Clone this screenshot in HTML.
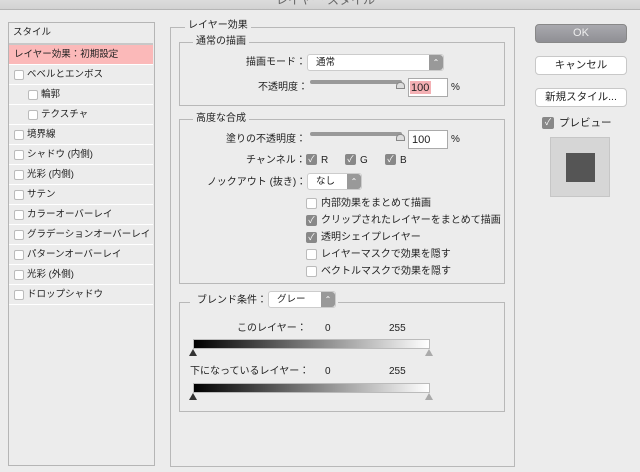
<!DOCTYPE html>
<html><head><meta charset="utf-8"><style>
*{margin:0;padding:0;box-sizing:border-box}
body{width:640px;height:472px;background:#ececec;font-family:"Liberation Sans","Noto Sans CJK JP",sans-serif;font-size:10px;line-height:12px;color:#222;position:relative;overflow:hidden}
.a{position:absolute}
.cb{position:absolute;width:10px;height:10px;border:1px solid #bbb;background:#fff;border-radius:2px}
.ck{position:absolute;width:11px;height:11px;background:#888;border-radius:2px;color:#fff;font-size:9px;line-height:11px;text-align:center}
.box{position:absolute;border:1px solid #b8b8b8}
.lg{position:absolute;background:#ececec;padding:0 3px;font-size:10px}
.row{position:absolute;left:9px;width:144px;height:20px;border-bottom:1px solid #fff;font-size:9.5px;line-height:20px}
.sel{position:absolute;background:#fff;border:1px solid #ccc;border-radius:3px;height:17px;font-size:9.5px;line-height:15px;padding-left:8px}
.sel i{position:absolute;right:0;top:0;width:14px;height:15px;background:#999;border-radius:0 3px 3px 0;color:#fff;font-style:normal;font-size:8px;text-align:center;line-height:15px}
.sl{position:absolute;height:4px;background:#999;border-radius:2px}
.btn{position:absolute;left:535px;width:92px;height:19px;background:#fff;border:1px solid #c8c8c8;border-radius:4px;text-align:center;font-size:10.5px;line-height:17px}
.grad{position:absolute;height:10px;background:linear-gradient(to right,#000,#fff);border:1px solid #bbb}
.tri{position:absolute;width:0;height:0;border-left:4px solid transparent;border-right:4px solid transparent}
</style></head><body>
<div class="a" style="left:0;top:0;width:640px;height:10px;background:linear-gradient(#dcdcdc,#d2d2d2);border-bottom:1px solid #b5b5b5"></div>
<div class="a" style="left:276px;top:-6px;font-size:12px;color:#666">レイヤー スタイル</div>

<div class="a" style="left:8px;top:22px;width:147px;height:444px;border:1px solid #b5b5b5;background:#ececec"></div>
<div class="row" style="top:23px;height:22px;border-bottom:2px solid #c8c8c8;padding-left:4px">スタイル</div>
<div class="row" style="top:45px;background:#fbb9b9;padding-left:5px">レイヤー効果：初期設定</div>
<div class="row" style="top:65px;padding-left:18px"><span class="cb" style="left:5px;top:5px"></span>ベベルとエンボス</div>
<div class="row" style="top:85px;padding-left:32px"><span class="cb" style="left:19px;top:5px"></span>輪郭</div>
<div class="row" style="top:105px;padding-left:32px"><span class="cb" style="left:19px;top:5px"></span>テクスチャ</div>
<div class="row" style="top:125px;padding-left:18px"><span class="cb" style="left:5px;top:5px"></span>境界線</div>
<div class="row" style="top:145px;padding-left:18px"><span class="cb" style="left:5px;top:5px"></span>シャドウ (内側)</div>
<div class="row" style="top:165px;padding-left:18px"><span class="cb" style="left:5px;top:5px"></span>光彩 (内側)</div>
<div class="row" style="top:185px;padding-left:18px"><span class="cb" style="left:5px;top:5px"></span>サテン</div>
<div class="row" style="top:205px;padding-left:18px"><span class="cb" style="left:5px;top:5px"></span>カラーオーバーレイ</div>
<div class="row" style="top:225px;padding-left:18px"><span class="cb" style="left:5px;top:5px"></span>グラデーションオーバーレイ</div>
<div class="row" style="top:245px;padding-left:18px"><span class="cb" style="left:5px;top:5px"></span>パターンオーバーレイ</div>
<div class="row" style="top:265px;padding-left:18px"><span class="cb" style="left:5px;top:5px"></span>光彩 (外側)</div>
<div class="row" style="top:285px;padding-left:18px"><span class="cb" style="left:5px;top:5px"></span>ドロップシャドウ</div>

<div class="box" style="left:170px;top:27px;width:345px;height:440px"></div>
<div class="lg" style="left:185px;top:20px">レイヤー効果</div>
<div class="box" style="left:179px;top:42px;width:326px;height:64px"></div>
<div class="lg" style="left:193px;top:36px">通常の描画</div>
<div class="a" style="left:246px;top:57px">描画モード：</div>
<div class="sel" style="left:307px;top:54px;width:137px">通常<i>⌃</i></div>
<div class="a" style="left:258px;top:82px">不透明度：</div>
<div class="sl" style="left:310px;top:80px;width:92px"></div>
<div class="a" style="left:396px;top:82px;width:9px;height:7px;background:#ddd;border:1px solid #888;border-radius:4px 4px 0 0"></div>
<div class="a" style="left:408px;top:78px;width:40px;height:19px;background:#fff;border:1px solid #aaa"></div>
<div class="a" style="left:410px;top:81px;width:21px;height:13px;background:#f4b0b4"></div>
<div class="a" style="left:411px;top:82px;font-size:11px">100</div>
<div class="a" style="left:451px;top:82px">%</div>

<div class="box" style="left:179px;top:119px;width:326px;height:165px"></div>
<div class="lg" style="left:193px;top:113px">高度な合成</div>
<div class="a" style="left:226px;top:134px">塗りの不透明度：</div>
<div class="sl" style="left:310px;top:132px;width:92px"></div>
<div class="a" style="left:396px;top:134px;width:9px;height:7px;background:#ddd;border:1px solid #888;border-radius:4px 4px 0 0"></div>
<div class="a" style="left:408px;top:130px;width:40px;height:19px;background:#fff;border:1px solid #aaa;font-size:11px;padding:3px 0 0 3px">100</div>
<div class="a" style="left:451px;top:134px">%</div>
<div class="a" style="left:246px;top:155px">チャンネル：</div>
<div class="ck" style="left:306px;top:154px">✓</div><div class="a" style="left:321px;top:155px">R</div>
<div class="ck" style="left:345px;top:154px">✓</div><div class="a" style="left:360px;top:155px">G</div>
<div class="ck" style="left:385px;top:154px">✓</div><div class="a" style="left:400px;top:155px">B</div>
<div class="a" style="left:207px;top:177px">ノックアウト (抜き)：</div>
<div class="sel" style="left:307px;top:173px;width:55px">なし<i>⌃</i></div>
<div class="cb" style="left:306px;top:198px;width:11px;height:11px"></div><div class="a" style="left:321px;top:198px">内部効果をまとめて描画</div>
<div class="ck" style="left:306px;top:215px">✓</div><div class="a" style="left:321px;top:215px">クリップされたレイヤーをまとめて描画</div>
<div class="ck" style="left:306px;top:232px">✓</div><div class="a" style="left:321px;top:232px">透明シェイプレイヤー</div>
<div class="cb" style="left:306px;top:249px;width:11px;height:11px"></div><div class="a" style="left:321px;top:249px">レイヤーマスクで効果を隠す</div>
<div class="cb" style="left:306px;top:266px;width:11px;height:11px"></div><div class="a" style="left:321px;top:266px">ベクトルマスクで効果を隠す</div>

<div class="box" style="left:179px;top:302px;width:326px;height:110px"></div>
<div class="a" style="left:190px;top:294px;width:148px;height:16px;background:#ececec"></div>
<div class="a" style="left:197px;top:295px">ブレンド条件：</div>
<div class="sel" style="left:268px;top:291px;width:68px">グレー<i>⌃</i></div>
<div class="a" style="left:237px;top:323px">このレイヤー：</div>
<div class="a" style="left:325px;top:323px">0</div>
<div class="a" style="left:389px;top:323px">255</div>
<div class="grad" style="left:193px;top:339px;width:237px"></div>
<div class="tri" style="left:189px;top:349px;border-bottom:7px solid #333"></div>
<div class="tri" style="left:425px;top:349px;border-bottom:7px solid #aaa"></div>
<div class="a" style="left:190px;top:366px">下になっているレイヤー：</div>
<div class="a" style="left:325px;top:366px">0</div>
<div class="a" style="left:389px;top:366px">255</div>
<div class="grad" style="left:193px;top:383px;width:237px"></div>
<div class="tri" style="left:189px;top:393px;border-bottom:7px solid #333"></div>
<div class="tri" style="left:425px;top:393px;border-bottom:7px solid #aaa"></div>

<div class="btn" style="top:24px;background:linear-gradient(#a9a9ae,#8f8f94);border-color:#888;color:#eee;font-size:11px">OK</div>
<div class="btn" style="top:56px">キャンセル</div>
<div class="btn" style="top:88px">新規スタイル...</div>
<div class="ck" style="left:542px;top:117px;width:12px;height:12px">✓</div>
<div class="a" style="left:559px;top:117px;font-size:10.5px">プレビュー</div>
<div class="a" style="left:550px;top:137px;width:60px;height:60px;background:#d6d6d6;border:1px solid #c6c6c6"></div>
<div class="a" style="left:566px;top:153px;width:29px;height:29px;background:#555"></div>
</body></html>
